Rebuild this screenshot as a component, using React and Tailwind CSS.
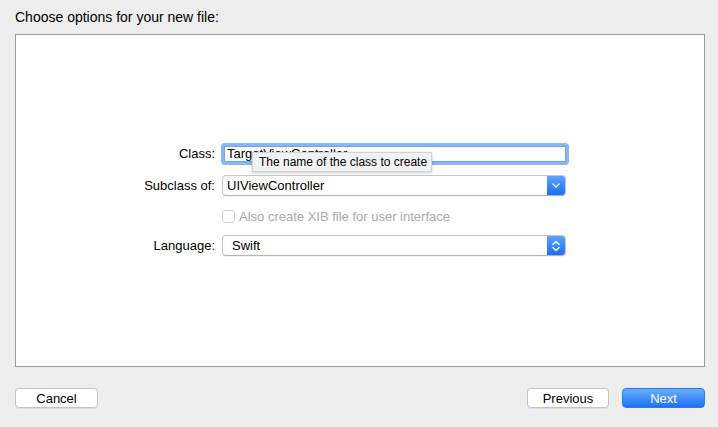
import { useState } from 'react'

const font = { fontFamily: '"Liberation Sans", Arial, sans-serif' }

function Chevron() {
  return (
    <svg width="8" height="5" viewBox="0 0 8 5" fill="none">
      <path d="M1 1l3 3 3-3" stroke="#fff" strokeWidth="1.4" strokeLinecap="round" strokeLinejoin="round" />
    </svg>
  )
}

function UpDown() {
  return (
    <svg width="8" height="12" viewBox="0 0 8 12" fill="none">
      <path d="M1 4.5l3-3 3 3M1 7.5l3 3 3-3" stroke="#fff" strokeWidth="1.4" strokeLinecap="round" strokeLinejoin="round" />
    </svg>
  )
}

function Popup({ value, icon, pad }) {
  return (
    <div className="flex h-[21px] w-[344px] items-stretch rounded-[4px] border border-[#c6c6c6] border-b-[#b4b4b4] bg-white shadow-[0_1px_0_rgba(0,0,0,0.04)]">
      <span className={'flex-1 text-[13px] leading-[19px] text-black ' + pad}>{value}</span>
      <span className="flex w-[18px] items-center justify-center rounded-r-[3px] bg-gradient-to-b from-[#5aa2fb] to-[#1a6ff4]">
        {icon}
      </span>
    </div>
  )
}

function Row({ label, children, className = '' }) {
  return (
    <div className={'flex items-center ' + className}>
      <span className="w-[206px] pr-[7px] text-right text-[13px] leading-[16px] text-black">{label}</span>
      {children}
    </div>
  )
}

export default function App() {
  const [xib, setXib] = useState(false)

  return (
    <div className="flex h-[427px] w-[718px] flex-col bg-[#ededed] pl-[15px] pr-[13px]" style={font}>
      <div className="h-[34px] pt-[9px] text-[14px] leading-[16px] text-black">Choose options for your new file:</div>

      <div className="flex h-[333px] flex-col justify-center border border-[#9b9b9b] bg-white pb-[2px]">
        <Row label="Class:" className="h-[22px]">
          <div className="relative">
            <div className="-ml-[1px] h-[22px] w-[348px] rounded-[4px] bg-[#86b6f3] p-[3px]">
              <div className="h-[16px] w-full overflow-hidden whitespace-nowrap bg-white pl-[3px] text-[13px] leading-[16px] text-black shadow-[inset_0_0_0_1px_#6fa4ea]">
                TargetViewController
              </div>
            </div>
            <div className="absolute left-[30px] top-[9px] flex h-[20px] w-[180px] items-center whitespace-nowrap border border-[#d2d2d2] bg-[#f2f2f2] pl-[6px] text-[12px] text-black shadow-[0_1px_3px_rgba(0,0,0,0.2)]">
              The name of the class to create
            </div>
          </div>
        </Row>

        <Row label="Subclass of:" className="mt-[10px] h-[21px]">
          <Popup value="UIViewController" icon={<Chevron />} pad="pl-[4px]" />
        </Row>

        <Row label="" className="mt-[14px] h-[13px]">
          <label className="flex items-center gap-[4px] text-[13px] leading-[13px] text-[#a9a9a9]">
            <input
              type="checkbox"
              checked={xib}
              disabled
              onChange={(e) => setXib(e.target.checked)}
              className="m-0 h-[13px] w-[13px] appearance-none rounded-[3px] border border-[#d4d4d4] bg-white"
            />
            Also create XIB file for user interface
          </label>
        </Row>

        <Row label="Language:" className="mt-[12px] h-[21px]">
          <Popup value="Swift" icon={<UpDown />} pad="pl-[9px]" />
        </Row>
      </div>

      <div className="mt-[21px] flex items-center justify-between">
        <button className="h-[20px] w-[83px] rounded-[4px] border border-[#c4c4c4] bg-white text-[13px] text-black shadow-[0_1px_0_rgba(0,0,0,0.05)]">
          Cancel
        </button>
        <div className="flex gap-[13px]">
          <button className="h-[20px] w-[82px] rounded-[4px] border border-[#c4c4c4] bg-white text-[13px] text-black shadow-[0_1px_0_rgba(0,0,0,0.05)]">
            Previous
          </button>
          <button className="h-[20px] w-[83px] rounded-[4px] border border-[#2a7af5] bg-gradient-to-b from-[#68adfd] to-[#1a70f6] text-[13px] text-white">
            Next
          </button>
        </div>
      </div>
    </div>
  )
}
